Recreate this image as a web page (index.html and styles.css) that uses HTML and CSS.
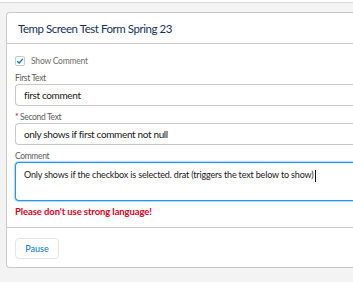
FILE: index.html
```html
<!DOCTYPE html>
<html lang="en">
<head>
  <meta charset="UTF-8" />
  <title>Temp Screen Test Form Spring 23</title>
  <link rel="stylesheet" href="styles.css">
</head>
<body>
  <div class="topbar"></div>
  <div class="card">
    <div class="card-header">
      <h1>Temp Screen Test Form Spring 23</h1>
    </div>

    <div class="card-body">
      <!-- checkbox -->
      <label class="check-row">
        <span class="check-box">
          <svg width="8" height="8" viewBox="0 0 8 8"><path d="M1.2 4.2 L3.2 6 L6.8 1.8" fill="none" stroke="#0176d3" stroke-width="1.3"/></svg>
        </span>
        <span class="check-label">Show Comment</span>
      </label>

      <div class="field">
        <div class="field-label">First Text</div>
        <div class="input">first comment</div>
      </div>

      <div class="field">
        <div class="field-label"><span class="req">*</span> Second Text</div>
        <div class="input">only shows if first comment not null</div>
      </div>

      <div class="field">
        <div class="field-label">Comment</div>
        <div class="textarea">Only shows if the checkbox is selected. drat (triggers the text below to show)<span class="caret"></span></div>
      </div>

      <div class="error">Please don't use strong language!</div>
    </div>

    <div class="card-footer">
      <button class="btn">Pause</button>
    </div>
  </div>
</body>
</html>
```

FILE: styles.css
```css
* { box-sizing: border-box; }
body {
  margin: 0; background: #f3f3f3; overflow: hidden;
  font-family: 'Lato', sans-serif; color: #181818;
  width: 353px; height: 282px;
}
.topbar { height: 3px; background: #fff; border-bottom: 1px solid #d8d8d8; }
.card {
  margin: 9px 0 0 6px; width: 347px;
  background: #fff; border: 1px solid #c9c9c9; border-right: none;
  border-radius: 4px 0 0 4px;
}
.card-header {
  height: 31px; border-bottom: 1px solid #c9c9c9;
  padding-left: 11px; display: flex; align-items: center;
}
h1 { margin: 0; font-size: 11.5px; letter-spacing: -0.45px; font-weight: 400; color: #16325c; }
.card-body { padding: 10px 0 8px 8px; }
.check-row { display: flex; align-items: center; height: 14px; gap: 6px; }
.check-box {
  width: 10px; height: 10px; border: 1px solid #c9c9c9; border-radius: 2px;
  display: flex; align-items: center; justify-content: center;
}
.check-label { font-size: 8.5px; letter-spacing: -0.2px; color: #706e6b; }
.field { margin-top: 4px; }
.field + .field { margin-top: 5px; }
.field-label { font-size: 8.5px; letter-spacing: -0.35px; line-height: 12px; color: #5c5c5c; }
.req { color: #ea001e; }
.input {
  height: 22px; border: 1px solid #c9c9c9; border-right: none;
  border-radius: 4px 0 0 4px;
  padding-left: 8px; font-size: 10px; letter-spacing: -0.35px; line-height: 20px;
}
.textarea {
  height: 39px; border: 1px solid #1b96ff; border-right: none;
  border-radius: 4px 0 0 4px;
  box-shadow: 0 0 2px #0176d3;
  padding: 5px 8px; font-size: 9px; letter-spacing: -0.16px; line-height: 14px; white-space: nowrap;
}
.caret { display: inline-block; width: 1px; height: 12px; background: #181818; vertical-align: middle; margin-left: 1px; }
.error { margin-top: 4px; font-size: 9.5px; letter-spacing: -0.1px; line-height: 14px; font-weight: 700; color: #ea001e; }
.card-footer { border-top: 1px solid #c9c9c9; padding: 8px 0 8px 8px; }
.btn {
  height: 21px; width: 44px; background: #fff; border: 1px solid #e5e5e5;
  border-radius: 4px; color: #0176d3; font-family: inherit; font-size: 9px; padding: 0;
}
```
